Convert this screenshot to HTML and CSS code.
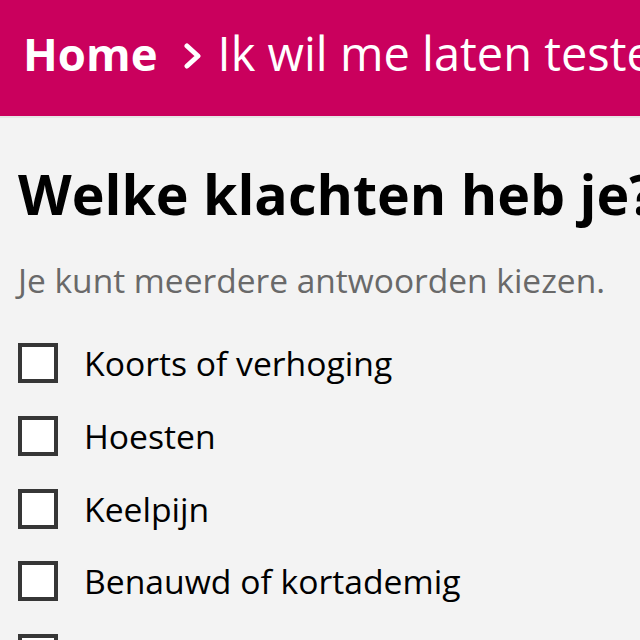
FILE: index.html
```html
<!DOCTYPE html>
<html lang="nl">
<head>
  <meta charset="UTF-8" />
  <title>Ik wil me laten testen</title>
  <meta name="viewport" content="width=device-width, initial-scale=1.0" />
  <link rel="stylesheet" href="styles.css">
</head>
<body>
  <header class="topbar">
    <nav class="crumbs">
      <a class="crumb-home" href="#">Home</a>
      <svg class="crumb-sep" width="18" height="26" viewBox="0 0 18 26" aria-hidden="true">
        <path d="M3 3 L14 13 L3 23" fill="none" stroke="#fff" stroke-width="5" stroke-linecap="round" stroke-linejoin="round"/>
      </svg>
      <span class="crumb-current">Ik wil me laten testen op corona</span>
    </nav>
  </header>

  <main class="content">
    <h1>Welke klachten heb je?</h1>
    <p class="hint">Je kunt meerdere antwoorden kiezen.</p>

    <ul class="choices">
      <li><label><input type="checkbox"><span class="box"></span>Koorts of verhoging</label></li>
      <li><label><input type="checkbox"><span class="box"></span>Hoesten</label></li>
      <li><label><input type="checkbox"><span class="box"></span>Keelpijn</label></li>
      <li><label><input type="checkbox"><span class="box"></span>Benauwd of kortademig</label></li>
      <li><label><input type="checkbox"><span class="box"></span>Verkouden</label></li>
    </ul>
  </main>
</body>
</html>
```

FILE: styles.css
```css
body {
  margin: 0;
  background: #f3f3f3;
  font-family: "Open Sans", "Noto Sans", sans-serif;
  color: #000;
  overflow: hidden;
}

.topbar {
  background: #ca005d;
  height: 116px;
  border-bottom: 2px solid #e6e6e6;
  display: flex;
  align-items: center;
  padding-left: 23px;
  white-space: nowrap;
}

.crumbs {
  display: flex;
  align-items: center;
  color: #fff;
  font-size: 47px;
  line-height: 60px;
  margin-top: -11px;
}

.crumb-home {
  color: #fff;
  text-decoration: none;
  font-weight: 700;
  font-size: 45.5px;
}

.crumb-sep {
  margin: 7px 16px 0 26px;
}

.content {
  padding: 0 18px;
}

h1 {
  font-size: 55.5px;
  font-weight: 700;
  line-height: 72px;
  margin: 39.5px 0 0;
  white-space: nowrap;
}

.hint {
  color: #696969;
  font-size: 33.5px;
  line-height: 40px;
  margin: 30.5px 0 0;
  white-space: nowrap;
}

.choices {
  list-style: none;
  margin: 43px 0 0;
  padding: 0;
}

.choices li {
  margin-bottom: 32.75px;
}

.choices label {
  display: flex;
  align-items: center;
  gap: 26px;
  font-size: 33.7px;
  line-height: 40px;
}

.choices input {
  display: none;
}

.box {
  width: 32px;
  height: 32px;
  border: 4px solid #363636;
  background: #fff;
  flex-shrink: 0;
}
```
